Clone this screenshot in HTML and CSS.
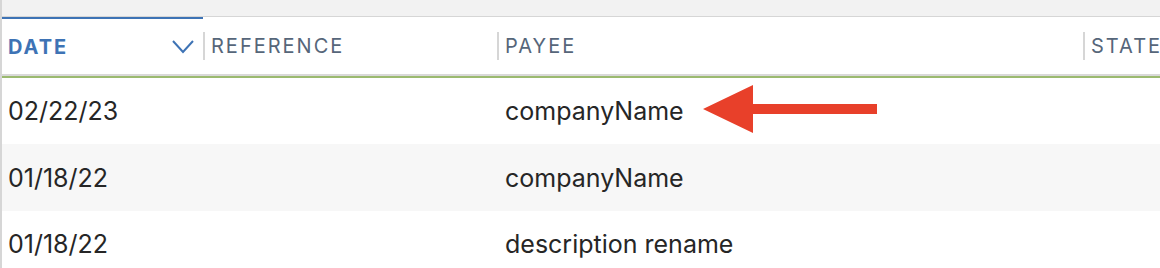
FILE: index.html
```html
<!DOCTYPE html>
<html lang="en">
<head>
  <meta charset="UTF-8">
  <meta name="viewport" content="width=device-width, initial-scale=1.0">
  <title>Transactions</title>
  <link rel="stylesheet" href="styles.css">
</head>
<body>
  <div class="register">
    <div class="toolbar-strip"></div>

    <div class="table">
      <div class="header-row">
        <div class="th th-sorted">
          <span class="th-text">DATE</span>
          <svg class="sort-icon" width="24" height="16" viewBox="0 0 24 16">
            <path d="M2 2 L12 13 L22 2" fill="none" stroke="#3e73b5" stroke-width="2"/>
          </svg>
        </div>
        <div class="th"><span class="th-label">REFERENCE</span></div>
        <div class="th"><span class="th-label">PAYEE</span></div>
        <div class="th"><span class="th-label">STATE</span></div>
      </div>

      <div class="row">
        <div class="td">02/22/23</div>
        <div class="td"></div>
        <div class="td payee">
          companyName
          <svg class="callout" width="176" height="50" viewBox="0 0 176 50">
            <polygon points="0,25 50,1 50,20 174,20 174,30 50,30 50,49" fill="#e8402a"/>
          </svg>
        </div>
        <div class="td"></div>
      </div>
      <div class="row row-alt">
        <div class="td">01/18/22</div>
        <div class="td"></div>
        <div class="td payee">companyName</div>
        <div class="td"></div>
      </div>
      <div class="row">
        <div class="td">01/18/22</div>
        <div class="td"></div>
        <div class="td payee">description rename</div>
        <div class="td"></div>
      </div>
    </div>
  </div>
</body>
</html>
```

FILE: styles.css
```css
body {
  margin: 0;
  background-color: #fff;
  font-family: Inter, "Noto Sans", sans-serif;
  overflow: hidden;
}

.register {
  height: 268px;
  border-left: 2px solid #d6d6d6;
}

.toolbar-strip {
  height: 16px;
  background-color: #f2f2f2;
  border-bottom: 1px solid #d6d6d6;
}

.header-row,
.row {
  display: grid;
  grid-template-columns: 201px 294px 586px 1fr;
}

.header-row {
  height: 57px;
  border-bottom: 2px solid #d9d9d9;
  box-shadow: 0 2px 0 #9bba70;
  margin-bottom: 2px;
}

.th {
  display: flex;
  align-items: center;
  font-size: 20px;
  letter-spacing: 2px;
  color: #56667a;
  white-space: nowrap;
  overflow: hidden;
}

.th-label {
  display: flex;
  align-items: center;
  height: 28px;
  border-left: 2px solid #d6d6d6;
  padding-left: 6px;
}

.th-sorted {
  border-top: 2px solid #3e73b5;
  padding-left: 6px;
  padding-right: 8px;
  justify-content: space-between;
  color: #3e73b5;
  font-weight: 700;
  letter-spacing: 2px;
}

.sort-icon {
  display: block;
}

.row {
  height: 66px;
  align-items: center;
  font-size: 25px;
  color: #262626;
}

.row-alt {
  height: 67px;
  background-color: #f7f7f7;
}

.td {
  padding-left: 6px;
  white-space: nowrap;
}

.payee {
  position: relative;
  padding-left: 8px;
}

.callout {
  position: absolute;
  left: 206px;
  top: -12px;
}
```
